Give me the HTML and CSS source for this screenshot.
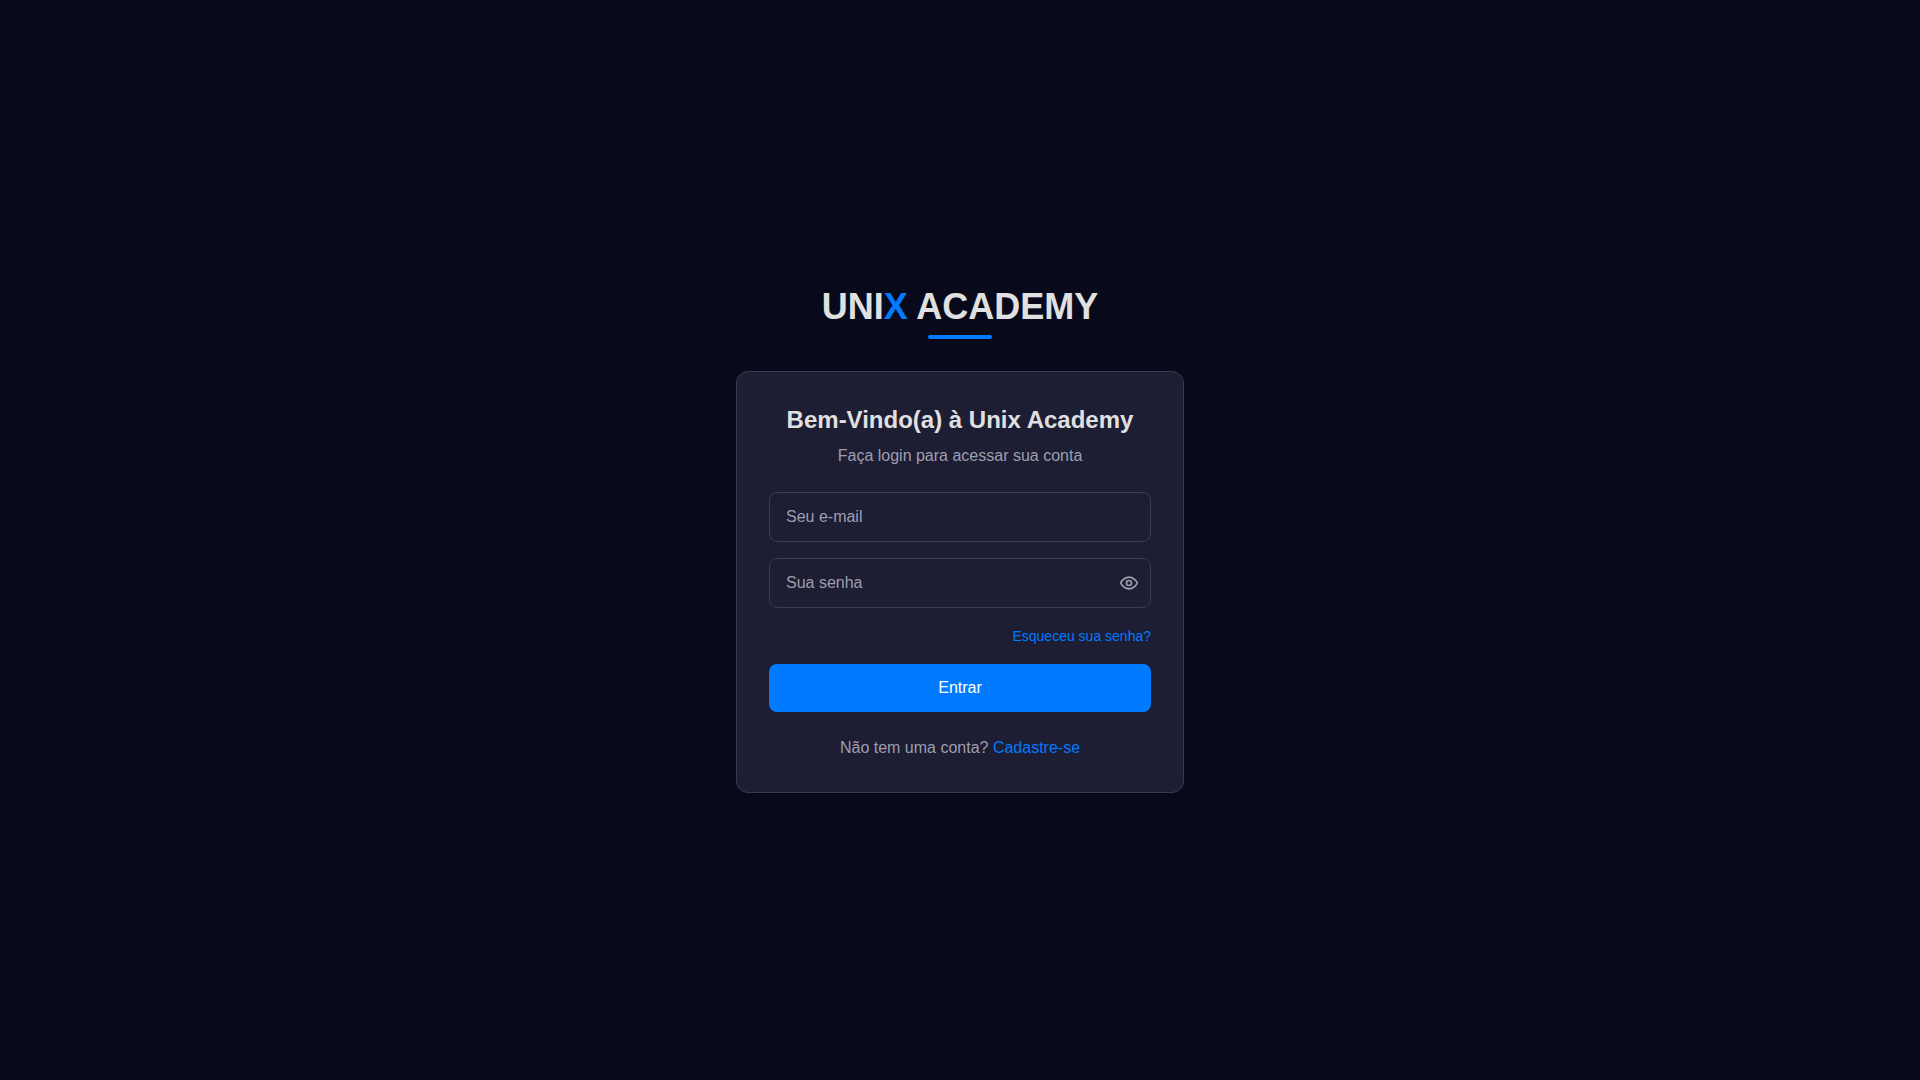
FILE: index.html
```
<!DOCTYPE html>
<html lang="pt-BR">
<head>
<meta charset="utf-8">
<meta name="viewport" content="width=device-width, initial-scale=1">
<title>Unix Academy</title>
<link rel="stylesheet" href="styles.css">
</head>
<body>
<main class="login">
  <header class="brand">
    <h1 class="brand-name">UNI<span class="brand-accent">X</span> ACADEMY</h1>
    <div class="brand-bar"></div>
  </header>
  <section class="card">
    <h2 class="card-title">Bem-Vindo(a) à Unix Academy</h2>
    <p class="card-subtitle">Faça login para acessar sua conta</p>
    <form class="form">
      <input class="input" type="email" placeholder="Seu e-mail" aria-label="Seu e-mail">
      <div class="password">
        <input class="input input-password" type="password" placeholder="Sua senha" aria-label="Sua senha">
        <button class="toggle" type="button" aria-label="Mostrar senha">
          <svg width="20" height="20" viewBox="0 0 24 24" fill="none" stroke="currentColor" stroke-width="2" stroke-linecap="round" stroke-linejoin="round" aria-hidden="true">
            <path d="M2 12s3-7 10-7 10 7 10 7-3 7-10 7-10-7-10-7Z"/>
            <circle cx="12" cy="12" r="3"/>
          </svg>
        </button>
      </div>
      <div class="forgot"><a class="link link-small" href="#">Esqueceu sua senha?</a></div>
      <button class="submit" type="submit">Entrar</button>
    </form>
    <p class="signup">Não tem uma conta? <a class="link" href="#">Cadastre-se</a></p>
  </section>
</main>
</body>
</html>
```
FILE: styles.css
```
*, *::before, *::after { box-sizing: border-box; }

body {
  margin: 0;
  background: #08091b;
  color: #e0e0e0;
  font: 16px/24px "Liberation Sans", Arial, sans-serif;
}

h1, h2, p { margin: 0; }

input, button { font: inherit; }

.login {
  min-height: 100vh;
  display: flex;
  flex-direction: column;
  align-items: center;
  justify-content: center;
  gap: 32px;
  padding: 16px;
}

.brand {
  display: flex;
  flex-direction: column;
  align-items: center;
  gap: 8px;
}

.brand-name {
  font-size: 36px;
  line-height: 40px;
  font-weight: 700;
}

.brand-accent { color: #007bff; }

.brand-bar {
  width: 64px;
  height: 4px;
  border-radius: 2px;
  background: #007bff;
}

.card {
  width: 100%;
  max-width: 448px;
  padding: 32px;
  border: 1px solid #3a3a50;
  border-radius: 12px;
  background: #1d1d34;
  text-align: center;
}

.card-title {
  font-size: 24px;
  line-height: 32px;
  font-weight: 700;
}

.card-subtitle {
  margin-top: 8px;
  color: #9d9fae;
}

.form {
  display: flex;
  flex-direction: column;
  gap: 16px;
  margin-top: 24px;
}

.input {
  display: block;
  width: 100%;
  height: 50px;
  padding: 12px 16px;
  border: 1px solid #3a3a50;
  border-radius: 8px;
  outline: 0;
  background: transparent;
  color: #e0e0e0;
}

.input::placeholder { color: #9d9fae; opacity: 1; }

.input-password { padding-right: 48px; }

.password { position: relative; }

.toggle {
  position: absolute;
  top: 0;
  right: 0;
  bottom: 0;
  display: flex;
  align-items: center;
  padding: 0 12px;
  border: 0;
  background: none;
  color: #9d9fae;
  cursor: pointer;
}

.forgot { text-align: right; }

.link {
  color: #007bff;
  text-decoration: none;
}

.link:hover { text-decoration: underline; }

.link-small { font-size: 14px; }

.submit {
  padding: 12px 16px;
  border: 0;
  border-radius: 8px;
  background: #007bff;
  color: #fff;
  cursor: pointer;
}

.signup {
  margin-top: 24px;
  color: #9d9fae;
}
```
